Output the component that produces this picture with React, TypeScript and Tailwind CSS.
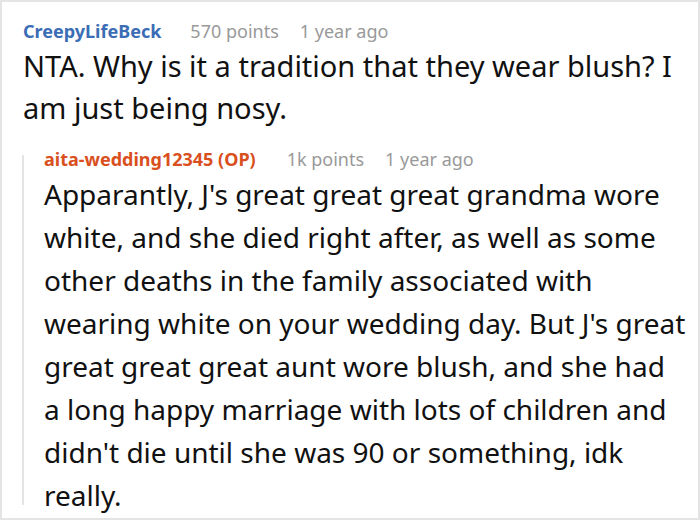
import React from 'react';

interface CommentHeaderProps {
    author: string;
    authorClass: string;
    points: string;
    age: string;
    gap: string;
}

function CommentHeader(props: CommentHeaderProps) {
    const {author, authorClass, points, age, gap} = props;
    return (
        <div className={`flex flex-row items-center ${gap} text-[18px] leading-[24px]`}>
            <span className={`font-bold ${authorClass}`}>{author}</span>
            <div className="flex flex-row gap-[21px] text-[#999999]">
                <span>{points}</span>
                <span>{age}</span>
            </div>
        </div>
    );
}

const replyLines = [
    "Apparantly, J's great great great grandma wore",
    'white, and she died right after, as well as some',
    'other deaths in the family associated with',
    "wearing white on your wedding day. But J's great",
    'great great great aunt wore blush, and she had',
    'a long happy marriage with lots of children and',
    "didn't die until she was 90 or something, idk",
    'really.',
];

export default function App() {
    return (
        <div className="w-[700px] h-[520px] bg-white border-2 border-[#e4e4e4] overflow-hidden font-['Noto_Sans',sans-serif] text-[#111111]">
            <div className="pl-[21px] pt-[17px]">
                <CommentHeader author="CreepyLifeBeck" authorClass="text-[#3a6db5]" points="570 points" age="1 year ago" gap="gap-[29px]"/>
                <div className="text-[29px] leading-[42px] mt-[2px]">
                    <p>NTA. Why is it a tradition that they wear blush? I</p>
                    <p>am just being nosy.</p>
                </div>
                <div className="flex flex-row mt-[18px] -ml-[1px]">
                    <div className="w-[2px] bg-[#e4e4e4] mt-[8px] mb-[12px]"/>
                    <div className="pl-[20px]">
                        <CommentHeader author="aita-wedding12345 (OP)" authorClass="text-[#d9501e]" points="1k points" age="1 year ago" gap="gap-[31px]"/>
                        <div className="text-[28px] leading-[43px] mt-[2px]">
                            {replyLines.map((line) => (
                                <p key={line}>{line}</p>
                            ))}
                        </div>
                    </div>
                </div>
            </div>
        </div>
    );
}
